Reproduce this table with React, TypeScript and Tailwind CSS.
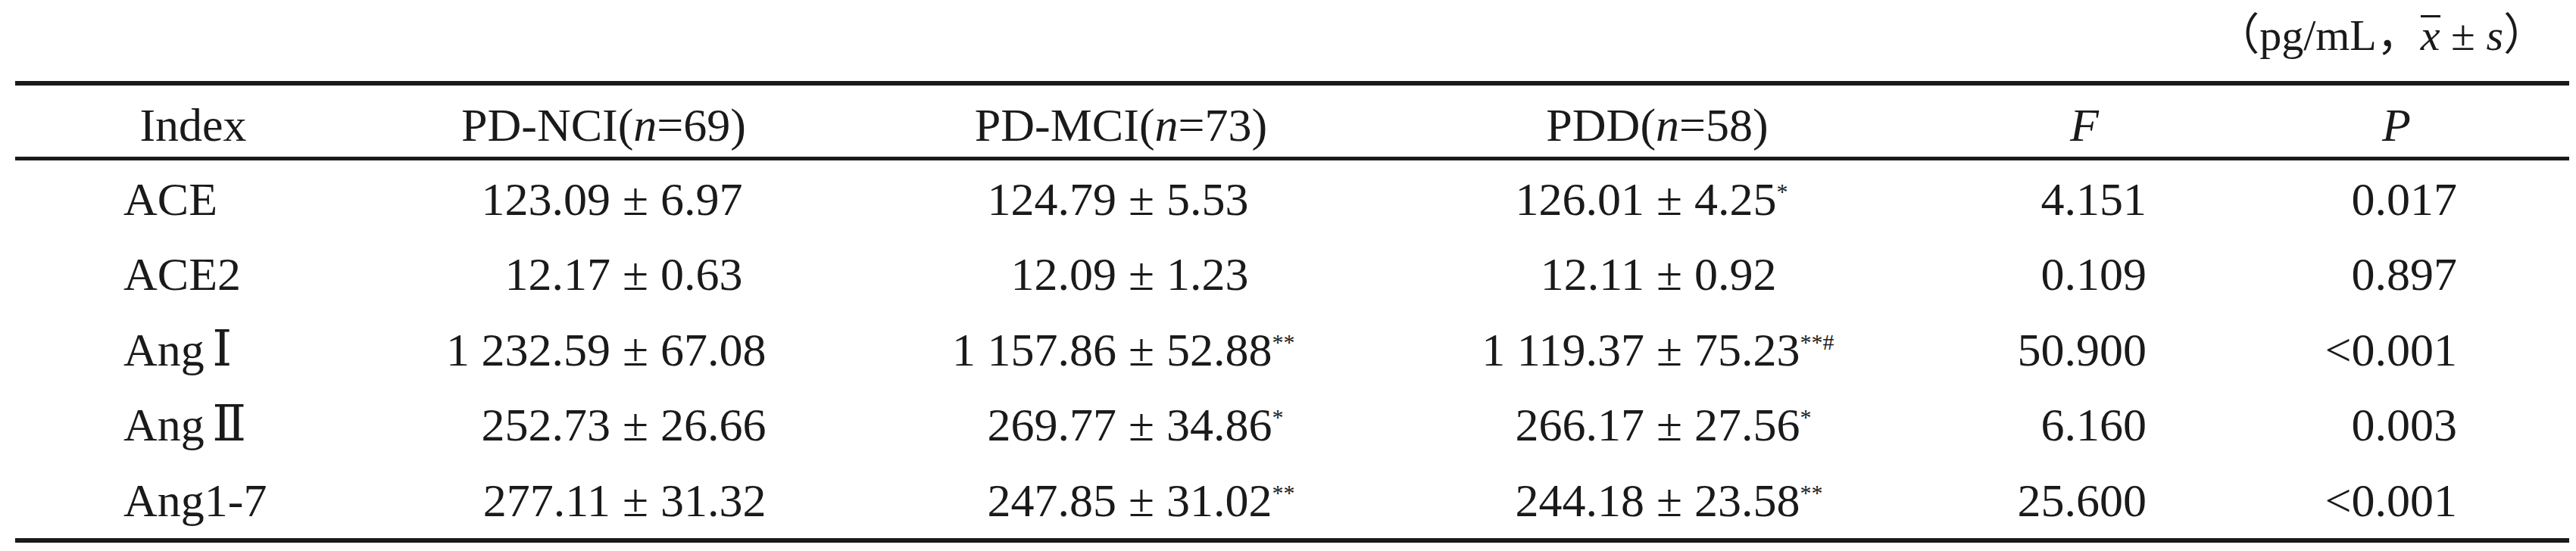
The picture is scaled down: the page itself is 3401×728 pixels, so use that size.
const ink = "text-[#1a1a1a]";

const rows = [
  {
    label: "ACE",
    vals: [
      ["123.09", "6.97", ""],
      ["124.79", "5.53", ""],
      ["126.01", "4.25", "*"],
    ],
    f: "4.151",
    p: "0.017",
  },
  {
    label: "ACE2",
    vals: [
      ["12.17", "0.63", ""],
      ["12.09", "1.23", ""],
      ["12.11", "0.92", ""],
    ],
    f: "0.109",
    p: "0.897",
  },
  {
    label: "Ang",
    roman: "Ⅰ",
    vals: [
      ["1 232.59", "67.08", ""],
      ["1 157.86", "52.88", "**"],
      ["1 119.37", "75.23", "**#"],
    ],
    f: "50.900",
    p: "<0.001",
  },
  {
    label: "Ang",
    roman: "Ⅱ",
    vals: [
      ["252.73", "26.66", ""],
      ["269.77", "34.86", "*"],
      ["266.17", "27.56", "*"],
    ],
    f: "6.160",
    p: "0.003",
  },
  {
    label: "Ang1-7",
    vals: [
      ["277.11", "31.32", ""],
      ["247.85", "31.02", "**"],
      ["244.18", "23.58", "**"],
    ],
    f: "25.600",
    p: "<0.001",
  },
];

// widths of the three group columns and of the part left of the ±
const groupCols = ["w-[680px]", "w-[660px]", "w-[600px]"];
const leftParts = ["w-[246px]", "w-[234px]", "w-[271px]"];

function MeanSd({ m, sd, mark, col }: { m: string; sd: string; mark: string; col: number }) {
  return (
    <div className={`${groupCols[col]} flex shrink-0 whitespace-pre`}>
      <span className={`${leftParts[col]} shrink-0 text-right`}>{m}</span>
      <span className="w-[66px] shrink-0 text-center">±</span>
      <span>
        {sd}
        {mark && <span className="text-[30px] leading-none align-[21px]">{mark}</span>}
      </span>
    </div>
  );
}

function Group({ name, n }: { name: string; n: number }) {
  return (
    <>
      {name}(<i>n</i>={n})
    </>
  );
}

export default function App() {
  return (
    <div className={`w-[3401px] h-[728px] bg-white font-['Liberation_Serif','DejaVu_Serif','Noto_Sans_CJK_SC',serif] ${ink}`}>
      <div className="ml-[20px] w-[3372px]">
        {/* unit caption */}
        <div className="h-[107px] pt-[17px] pr-[29px] text-right text-[58px] leading-[60px] whitespace-pre">
          （pg/mL，
          <i className="inline-block leading-[48px] border-t-[3px] border-[#1a1a1a]">x</i> ± <i>s</i>）
        </div>

        <div className="h-[6px] bg-[#1a1a1a]" />

        {/* header */}
        <div className="flex h-[94px] pt-[10px] text-[62px] leading-[84px] whitespace-pre">
          <div className="w-[470px] shrink-0 text-center">Index</div>
          <div className="w-[614px] shrink-0 text-center">
            <Group name="PD-NCI" n={69} />
          </div>
          <div className="w-[752px] shrink-0 text-center">
            <Group name="PD-MCI" n={73} />
          </div>
          <div className="w-[664px] shrink-0 text-center">
            <Group name="PDD" n={58} />
          </div>
          <div className="w-[464px] shrink-0 text-center italic">F</div>
          <div className="w-[360px] shrink-0 text-center italic">P</div>
        </div>

        <div className="h-[5px] bg-[#1a1a1a]" />

        {/* body */}
        <div className="pt-[2px] text-[62px] leading-[99.4px]">
          {rows.map((r, i) => (
            <div key={i} className="flex h-[99.4px]">
              <div className="w-[540px] shrink-0 pl-[143px] whitespace-pre">
                {r.label}
                {r.roman && (
                  <>
                    {" "}
                    <span className="-ml-[5px] text-[66px] leading-none">{r.roman}</span>
                  </>
                )}
              </div>
              {r.vals.map((v, j) => (
                <MeanSd key={j} m={v[0]} sd={v[1]} mark={v[2]} col={j} />
              ))}
              <div className="w-[334px] shrink-0 text-right">{r.f}</div>
              <div className="w-[410px] shrink-0 text-right">{r.p}</div>
            </div>
          ))}
        </div>

        <div className="h-[6px] bg-[#1a1a1a]" />
      </div>
    </div>
  );
}
